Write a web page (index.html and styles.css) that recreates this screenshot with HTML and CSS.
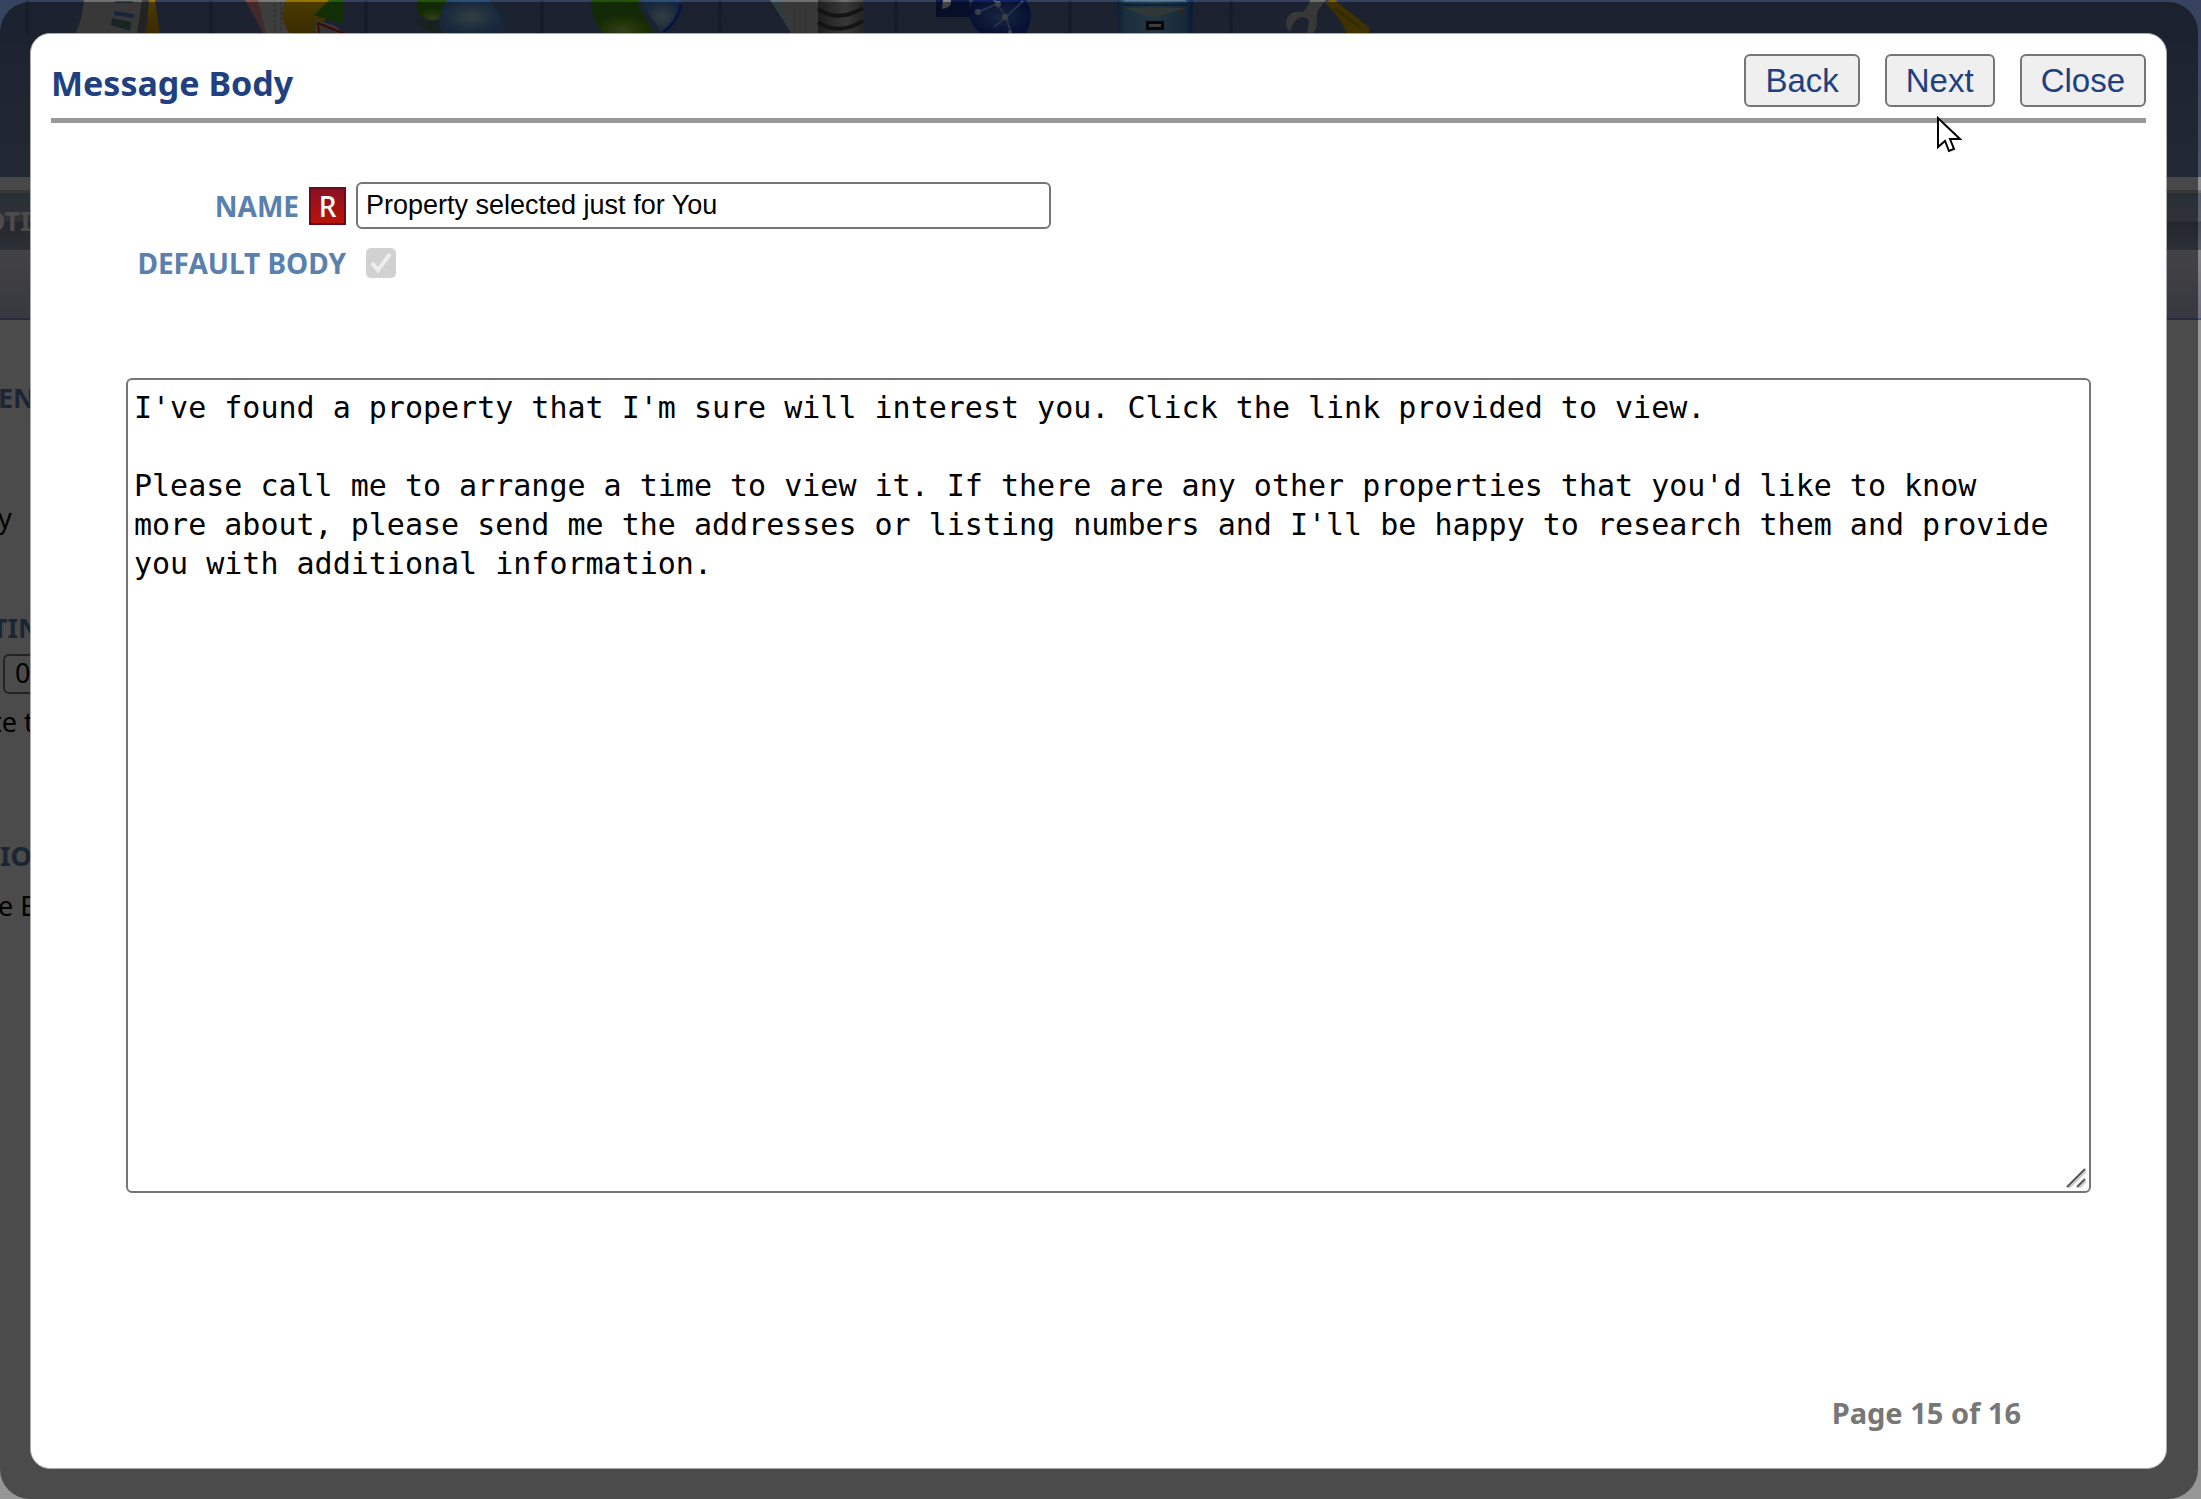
FILE: index.html
```html
<!DOCTYPE html>
<html lang="en">
<head>
    <meta charset="utf-8">
    <meta name="viewport" content="width=device-width, initial-scale=1.0">
    <title>Message Body</title>
    <link rel="stylesheet" href="styles.css">
</head>

<body>
    <div class="page" inert>
        <div class="toolbar">
            <svg class="icons" width="1400" height="36" viewBox="0 0 1400 36">
                <defs>
                    <linearGradient id="gy" x2="0" y2="1"><stop stop-color="#ffc400"/><stop offset="1" stop-color="#c09000"/></linearGradient>
                    <radialGradient id="gg" cy=".9"><stop stop-color="#b0d060"/><stop offset=".5" stop-color="#70b020"/><stop offset="1" stop-color="#3a8a10"/></radialGradient>
                    <radialGradient id="gb"><stop stop-color="#a8d0dc"/><stop offset="1" stop-color="#4a80c8"/></radialGradient>
                    <radialGradient id="gw"><stop stop-color="#5080d8"/><stop offset="1" stop-color="#1838a8"/></radialGradient>
                    <linearGradient id="gs"><stop stop-color="#666"/><stop offset=".6" stop-color="#bbb"/><stop offset="1" stop-color="#777"/></linearGradient>
                    <linearGradient id="gc"><stop stop-color="#1f62b0"/><stop offset=".1" stop-color="#5a9cd0"/><stop offset=".5" stop-color="#7ab4d8"/><stop offset=".9" stop-color="#4a8cc8"/><stop offset="1" stop-color="#1a50a0"/></linearGradient>
                </defs>
                <path class="seps" d="M27 0v36M211 0v36M366 0v36M542 0v36M720 0v36M896 0v36M1070 0v36M1231 0v36"/>
                <!-- notebook -->
                <path d="M84 0h68l-4 34H75q7-13 9-34z" fill="#bbb"/>
                <path d="M148 0h7l5 34h-16z" fill="url(#gy)"/>
                <path d="M142 0h7l-3 34h-9z" fill="#777"/>
                <path d="M115 2h18" stroke="#4d9090" stroke-width="2"/>
                <path d="M114 13l20 3" stroke="#4a78c8" stroke-width="4"/>
                <path d="M112 18l19 4-1 9-19-6z" fill="#4d8078"/>
                <!-- report with pie chart -->
                <path d="M245 0h14l7 34h-2z" fill="#e08a8a"/>
                <path d="M258 0h32v34h-24z" fill="#ccc"/>
                <path d="M275 4v28M281 2v30" stroke="#aaa" stroke-width="2" stroke-dasharray="3 2"/>
                <path d="M286 0h47l-10 24-10 10h-23q-13-18-4-34z" fill="url(#gy)"/>
                <path d="M314 15L329 0h14q3 12-1 24z" fill="#3a9a18"/>
                <path d="M316 20l20 6 8 8h-28z" fill="#bbb"/>
                <path d="M318 23l27 11h-26z" fill="#aaa" stroke="#c82010" stroke-width="2"/>
                <!-- people -->
                <path d="M418 0h30l-6 18q-8 4-16 1-13-6-8-19z" fill="url(#gg)"/>
                <path d="M416 18q12 8 24 1l2 14q-14 0-25-9z" fill="#50705c"/>
                <path d="M447 0h42q16 18 15 27-1 4-6 7h-53q-6-4-6-10 1-14 8-24z" fill="url(#gb)"/>
                <!-- split pie chart -->
                <path d="M591 0h48l-1 5 16 29h-49q-14-14-14-34z" fill="url(#gg)"/>
                <path d="M643 0h38q1 18-18 34l-20-28z" fill="url(#gb)"/>
                <path d="M681 4q-3 18-18 28" fill="none" stroke="#1848d8" stroke-width="3"/>
                <!-- server -->
                <path d="M770 0h17l5 34z" fill="#9fc8d0"/>
                <path d="M781 0h38v34h-28z" fill="#bbb"/>
                <path d="M794 4v30M800 2v32M806 2v32" stroke="#aaa"/>
                <path d="M818 0h46v34h-46z" fill="url(#gs)"/>
                <path d="M818 9q20 14 45-1M818 22q20 14 45-1" fill="none" stroke="#444" stroke-width="4"/>
                <!-- globe -->
                <path d="M936 0h33l1 17h-34z" fill="#182f88"/>
                <path d="M943 0h8q1 8-9 9z" fill="#ddd"/>
                <path d="M973 0h53q10 18-1 34h-44q-18-16-8-34z" fill="url(#gw)"/>
                <path d="M978 12l19-8 9 13 17-16M1006 17l-12 10M1006 17l5 16M997 4l-3-4" fill="none" stroke="#7ba6f0" stroke-width="2"/>
                <g fill="#c8d8f0"><circle cx="978" cy="12" r="3"/><circle cx="998" cy="4" r="3"/><circle cx="1005" cy="17" r="3"/><circle cx="1010" cy="32" r="2"/></g>
                <!-- cabinet -->
                <path d="M1117 0h76l-1 34h-73z" fill="url(#gc)"/>
                <path d="M1122 5h66" stroke="#2a68c0" stroke-width="2"/>
                <path d="M1124 8h62l-34 10z" fill="#a0b8b8"/>
                <path d="M1124 0h62" stroke="#90c8ff" stroke-width="3"/>
                <path d="M1146 21h18v9h-18z" fill="#1a1a20"/><path d="M1149 24h12v3h-12z" fill="#ccc"/>
                <circle cx="1181" cy="12" r="2" fill="#c88830"/>
                <!-- wrench and screwdriver -->
                <path d="M1310 0h16l-8 10q-2 6-1 14-1 6-5 10h-5l2-14q-4-4-10-2-6 3-9 14-6-6-3-14 5-8 15-6 6-4 8-12z" fill="#bbb"/>
                <path d="M1325 3l5-3h6l2 3 31 24v7h-22q-7-18-22-31z" fill="#d4a800"/>
                <path d="M1334 8l27 20" stroke="#b08c00" stroke-width="3"/>
            </svg>
        </div>
        <div class="gap"></div>
        <div class="tabs">OTI</div>
        <div class="subbar"></div>
        <div class="behind">
            <h2 class="b-head b1">EN</h2>
            <p class="b-text b2">y</p>
            <h2 class="b-head b3">TIN</h2>
            <div class="b-box">0</div>
            <p class="b-text b4">te t</p>
            <h2 class="b-head b5">IO</h2>
            <p class="b-text b6">e E</p>
        </div>
    </div>

    <div class="overlay">
        <form class="dialog" role="dialog" aria-labelledby="title">
            <header class="head">
                <h1 id="title">Message Body</h1>
                <div class="buttons">
                    <button type="button">Back</button>
                    <button type="button">Next</button>
                    <button type="button">Close</button>
                </div>
            </header>
            <div class="fields">
                <div class="row">
                    <label for="name">NAME</label>
                    <span class="req">R</span>
                    <input type="text" id="name" value="Property selected just for You">
                </div>
                <div class="row">
                    <label for="def" class="wide">DEFAULT BODY</label>
                    <span class="check">
                        <input type="checkbox" id="def" checked disabled>
                        <svg viewBox="0 0 30 30" width="30" height="30"><path d="M6 15l6 7L24 6"/></svg>
                    </span>
                </div>
            </div>
            <div class="body">
                <textarea aria-label="Message Body">I've found a property that I'm sure will interest you. Click the link provided to view.

Please call me to arrange a time to view it. If there are any other properties that you'd like to know more about, please send me the addresses or listing numbers and I'll be happy to research them and provide you with additional information.</textarea>
                <svg class="grip" viewBox="0 0 20 20" width="20" height="20"><path class="lt" d="M3 20L20 3M13 20l7-7"/><path d="M1 19L19 1M11 19l8-8"/></svg>
            </div>
            <footer>Page 15 of 16</footer>
        </form>
    </div>

    <svg class="cursor" viewBox="0 0 26 38" width="26" height="38"><path d="M2 3v29l7-6 4 10 5-2-4-10h10z"/></svg>
</body>

</html>
```
FILE: styles.css
```css
* {
    box-sizing: border-box;
}

body {
    margin: 0;
    height: 100vh;
    overflow: hidden;
    font-family: "Noto Sans", sans-serif;
    font-size: 27px;
}

h1, h2, p {
    margin: 0;
}

/* page under the overlay */
.page {
    height: 100vh;
    overflow: hidden;
    background: #fafafa;
}

.page::after {
    content: "";
    position: fixed;
    inset: 0;
    background: #0006;
}

.toolbar {
    height: 177px;
    background: linear-gradient(#5a6f9e, #7588ac);
}

.icons {
    display: block;
}

.seps {
    fill: none;
    stroke: #4a5c88;
    stroke-width: 3;
}

.gap {
    height: 16px;
    background: #f0f0f0;
    border-bottom: 3px solid #bbb;
}

.tabs {
    height: 57px;
    padding-top: 8px;
    background: linear-gradient(#8a9bb5, #a0a8b8 28px, #75829c 29px, #97a1b2);
    color: #fff;
    font-weight: bold;
    line-height: 40px;
    text-indent: -16px;
}

.subbar {
    height: 70px;
    background: linear-gradient(#e0e0ec, #babad6);
    border-bottom: 2px solid #8090d0;
}

.behind {
    padding-top: 60px;
    white-space: nowrap;
}

.b-head {
    color: #5a80ad;
    font-size: 27px;
    line-height: 36px;
}

.b-text {
    line-height: 36px;
}

.b1 { text-indent: -2px; }
.b2 { margin-top: 84px; text-indent: -2px; }
.b3 { margin-top: 74px; text-indent: -8px; }
.b4 { margin-top: 10px; text-indent: -8px; }
.b5 { margin-top: 98px; }
.b6 { margin-top: 14px; text-indent: -2px; }

.b-box {
    width: 80px;
    height: 40px;
    margin: 8px 0 0 3px;
    padding-left: 10px;
    border: 2px solid #767676;
    border-radius: 6px;
    line-height: 34px;
}

.overlay {
    position: fixed;
    inset: 0;
    padding: 33px 34px 30px 30px;
    display: flex;
}

/* the dark frame, the page shows lighter at its corners */
.overlay::before {
    content: "";
    position: absolute;
    inset: 2px 3px 0 0;
    border-radius: 30px;
    background: #00000080;
}

.dialog {
    position: relative;
    flex: 1;
    display: flex;
    flex-direction: column;
    padding: 20px 20px 35px;
    background: #fff;
    border: 1px solid #aaa;
    border-radius: 20px;
}

.head {
    display: flex;
    justify-content: space-between;
    height: 69px;
    border-bottom: 5px solid #999;
}

h1 {
    color: #204080;
    font-size: 34px;
    line-height: 58px;
}

.buttons {
    display: flex;
    gap: 25px;
}

button {
    height: 53px;
    padding: 0 19px;
    background: #efefef;
    color: #204080;
    border: 2px solid #767676;
    border-radius: 6px;
    font: 33px "Liberation Sans", Arial, sans-serif;
    cursor: pointer;
}

.fields {
    padding: 54px 0 0 81px;
}

.row {
    display: flex;
    align-items: center;
    height: 57px;
    gap: 10px;
}

label {
    width: 167px;
    color: #5a80ad;
    font-size: 28px;
    font-weight: bold;
    text-align: right;
    white-space: nowrap;
}

label.wide {
    width: 214px;
}

.req {
    width: 37px;
    height: 38px;
    background: linear-gradient(#8a1024, #b81408);
    border: 2px solid #6a0a1c;
    color: #fff;
    font-size: 28px;
    font-weight: 500;
    line-height: 34px;
    text-align: center;
}

input[type=text] {
    width: 695px;
    height: 47px;
    padding: 0 8px;
    border: 2px solid #767676;
    border-radius: 6px;
    font: 27px "Liberation Sans", Arial, sans-serif;
}

.check {
    display: grid;
    margin-left: 10px;
}

.check > * {
    grid-area: 1 / 1;
}

.check input {
    appearance: none;
    width: 30px;
    height: 30px;
    margin: 0;
    background: #d1d1d1;
    border-radius: 5px;
}

.check path {
    fill: none;
    stroke: #eee;
    stroke-width: 4;
}

.body {
    position: relative;
    flex: 1;
    display: flex;
    margin: 87px 55px 0 75px;
}

textarea {
    flex: 1;
    padding: 8px 34px 8px 6px;
    border: 2px solid #767676;
    border-radius: 6px;
    font: 30px/39px "DejaVu Sans Mono", monospace;
    resize: none;
}

.grip {
    position: absolute;
    right: 5px;
    bottom: 5px;
    fill: none;
    stroke: #555;
    stroke-width: 2;
}

.grip .lt {
    stroke: #ccc;
}

footer {
    margin-top: 200px;
    padding-right: 125px;
    color: #777;
    font-size: 29px;
    font-weight: bold;
    line-height: 40px;
    text-align: right;
}

.cursor {
    position: absolute;
    left: 1936px;
    top: 115px;
    fill: #fff;
    stroke: #000;
    stroke-width: 2;
}
```
